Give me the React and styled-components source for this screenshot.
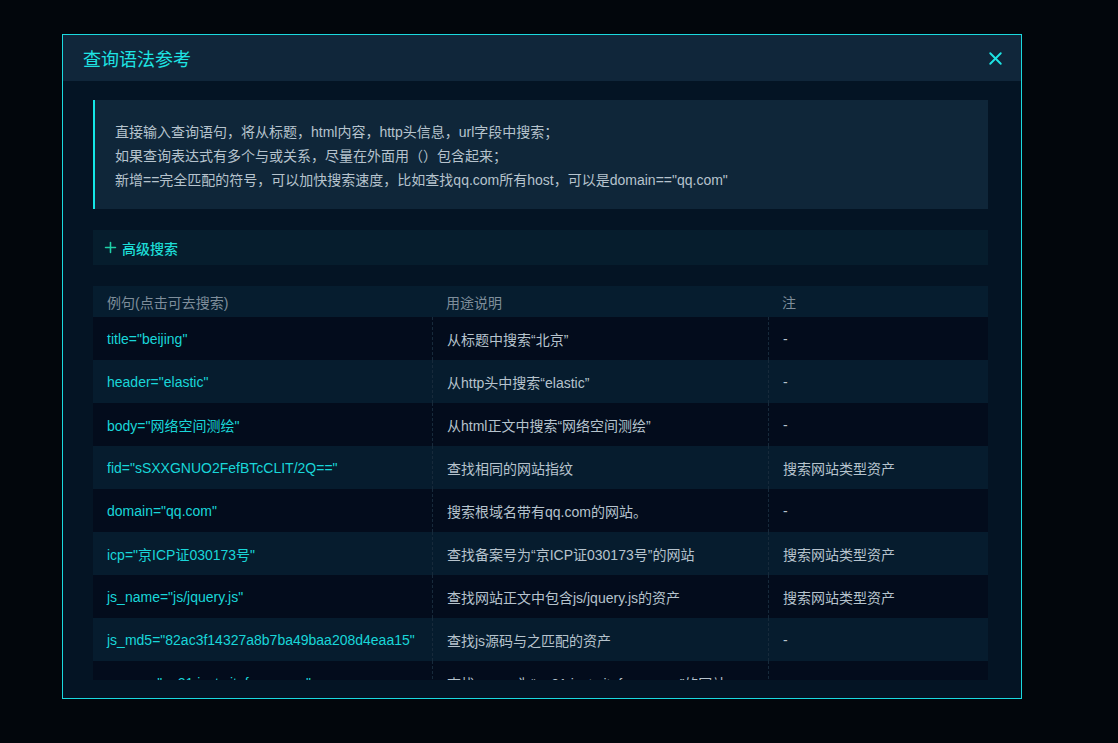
import React from "react";
import styled, { createGlobalStyle } from "styled-components";
import { Plus, X } from "lucide-react";

const rows = [
  ['title="beijing"', "从标题中搜索“北京”", "-"],
  ['header="elastic"', "从http头中搜索“elastic”", "-"],
  ['body="网络空间测绘"', "从html正文中搜索“网络空间测绘”", "-"],
  ['fid="sSXXGNUO2FefBTcCLIT/2Q=="', "查找相同的网站指纹", "搜索网站类型资产"],
  ['domain="qq.com"', "搜索根域名带有qq.com的网站。", "-"],
  ['icp="京ICP证030173号"', "查找备案号为“京ICP证030173号”的网站", "搜索网站类型资产"],
  ['js_name="js/jquery.js"', "查找网站正文中包含js/jquery.js的资产", "搜索网站类型资产"],
  ['js_md5="82ac3f14327a8b7ba49baa208d4eaa15"', "查找js源码与之匹配的资产", "-"],
  ['cname="ap21.inst.siteforce.com"', "查找cname为“ap21.inst.siteforce.com”的网站", "-"],
];

const App = () => {
  return (
    <>
      <GlobalStyle />
      <Modal>
        <Header>
          <Title>查询语法参考</Title>
          <Close><X size={21} strokeWidth={2.2} /></Close>
        </Header>
        <Body>
          <Notice>
            <p>直接输入查询语句，将从标题，html内容，http头信息，url字段中搜索；</p>
            <p>如果查询表达式有多个与或关系，尽量在外面用（）包含起来；</p>
            <p>新增==完全匹配的符号，可以加快搜索速度，比如查找qq.com所有host，可以是domain=="qq.com"</p>
          </Notice>
          <Advanced>
            <Plus size={17} strokeWidth={2.2} />
            <span>高级搜索</span>
          </Advanced>
          <TableWrap>
            <HeadRow>
              <HeadCell>例句(点击可去搜索)</HeadCell>
              <HeadCell>用途说明</HeadCell>
              <HeadCell>注</HeadCell>
            </HeadRow>
            {rows.map((r, i) => (
              <Row key={i} $alt={i % 2 === 1}>
                <Cell $query>{r[0]}</Cell>
                <Cell $divided>{r[1]}</Cell>
                <Cell $divided>{r[2]}</Cell>
              </Row>
            ))}
          </TableWrap>
        </Body>
      </Modal>
    </>
  );
};

export default App;

const GlobalStyle = createGlobalStyle`
  html, body {
    margin: 0;
    padding: 0;
    background: #02060c;
    font-family: "Liberation Sans", Arial, "Noto Sans CJK SC", sans-serif;
  }
  #root {
    min-height: 743px;
    padding-top: 34px;
    box-sizing: border-box;
  }
`;

const Modal = styled.div`
  width: 958px;
  margin-left: 62px;
  border: 1px solid #1ad9df;
  background: #041424;
`;

const Header = styled.div`
  height: 46px;
  display: flex;
  align-items: center;
  justify-content: space-between;
  padding: 0 15px 0 20px;
  background: #10263a;
`;

const Title = styled.div`
  color: #1ee3e3;
  font-size: 18px;
  font-family: "Noto Sans CJK SC", sans-serif;
`;

const Close = styled.div`
  color: #1ee3e3;
  display: flex;
  align-items: center;
`;

const Body = styled.div`
  padding: 19px 33px 18px 30px;
  display: flex;
  flex-direction: column;
`;

const Notice = styled.div`
  background: #0f2639;
  border-left: 2px solid #14e6e6;
  padding: 20px 20px 17px;
  color: #b6c3cd;
  font-size: 14px;
  line-height: 24px;

  p {
    margin: 0;
  }
`;

const Advanced = styled.div`
  margin-top: 21px;
  height: 35px;
  display: flex;
  align-items: center;
  gap: 3px;
  padding-left: 9px;
  background: #061d2d;
  color: #1ddcd6;
  font-size: 14px;
  font-family: "Noto Sans CJK SC", sans-serif;
  font-weight: 500;

  svg {
    color: #1fd0a8;
  }
`;

const TableWrap = styled.div`
  margin-top: 21px;
  height: 394px;
  overflow: hidden;
`;

const grid = `
  display: grid;
  grid-template-columns: 339px 336px 1fr;
`;

const HeadRow = styled.div`
  ${grid}
  height: 31px;
  background: #061d2f;
`;

const HeadCell = styled.div`
  display: flex;
  align-items: center;
  padding-left: 14px;
  color: #7f8e9b;
  font-size: 14px;
`;

const Row = styled.div`
  ${grid}
  height: 43px;
  background: ${(p) => (p.$alt ? "#061c2e" : "#030c1c")};
`;

const Cell = styled.div`
  display: flex;
  align-items: center;
  padding-left: 14px;
  font-size: 14px;
  white-space: nowrap;
  overflow: hidden;
  color: ${(p) => (p.$query ? "#19d6d9" : "#b6c3cd")};
  border-left: ${(p) => (p.$divided ? "1px dashed #172a3b" : "none")};
`;
